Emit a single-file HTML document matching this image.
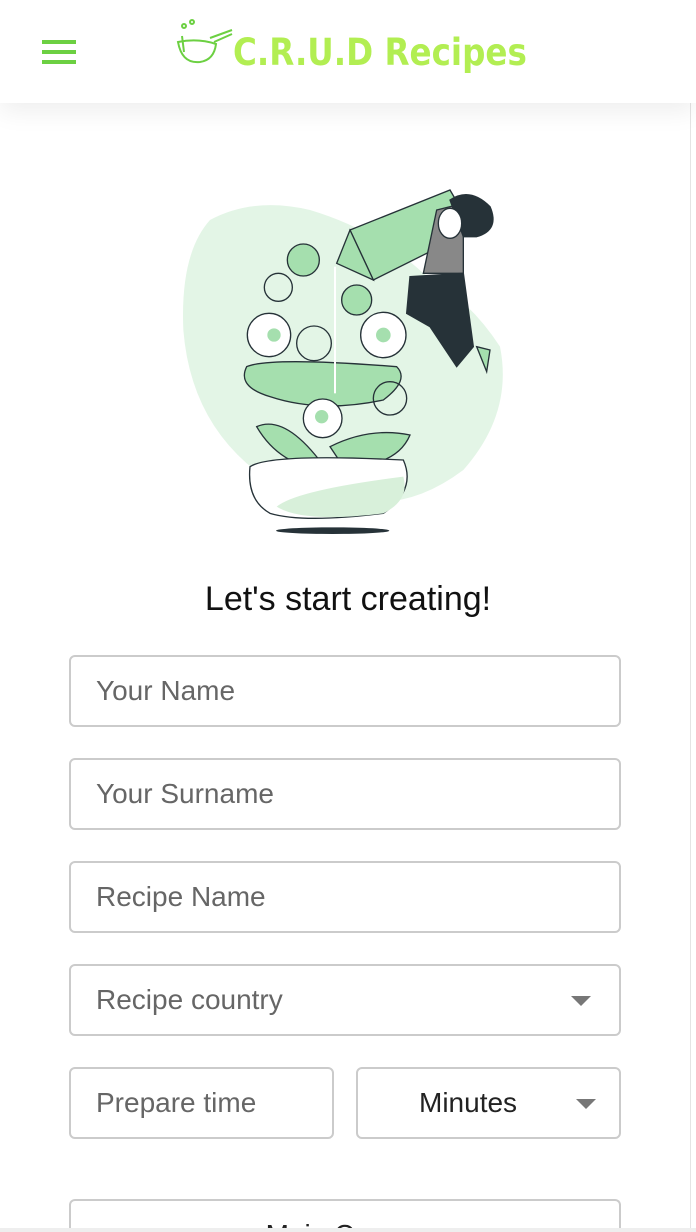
<!DOCTYPE html>
<html><head><meta charset="utf-8"><style>
*{box-sizing:border-box;margin:0;padding:0}
html,body{width:696px;height:1232px;overflow:hidden}
body{background:#fff;font-family:"Liberation Sans",sans-serif;position:relative}
.hdr{position:absolute;left:0;top:0;width:696px;height:103px;background:#fff;box-shadow:0 8px 24px rgba(0,0,0,.07);z-index:2}
.ham{position:absolute;left:42px;width:34px;height:4px;background:#6cd042}
.logo{position:absolute;left:233px;top:31px;font-size:37px;font-weight:bold;color:#b2ee52;font-family:"DejaVu Sans","Liberation Sans",sans-serif;transform:scaleX(.88);transform-origin:left;white-space:nowrap}
.fld{position:absolute;left:69px;width:552px;height:72px;border:2px solid #cbcbcb;border-radius:6px;font-size:28px;color:#666;padding-left:25px;line-height:68px;white-space:nowrap}
.arr{position:absolute;right:28px;top:30px;width:0;height:0;border-left:10px solid transparent;border-right:10px solid transparent;border-top:10px solid #777}
h1{position:absolute;top:580px;left:0;width:696px;text-align:center;font-size:34px;font-weight:normal;color:#111}
</style></head><body>
<div class="hdr">
<div class="ham" style="top:40px"></div><div class="ham" style="top:50px"></div><div class="ham" style="top:60px"></div>
<svg style="position:absolute;left:174px;top:18px" width="60" height="50" viewBox="0 0 60 50" fill="none" stroke="#6cd042" stroke-width="2">
<path d="M4 24 Q8 46 26 44 Q40 42 42 26 Q24 20 4 24Z"/><path d="M36 20 L58 12 M40 24 L58 16"/><circle cx="10" cy="8" r="2"/><circle cx="18" cy="4" r="2"/><path d="M8 18 L10 34"/></svg>
<div class="logo">C.R.U.D Recipes</div>
</div>
<div style="position:absolute;right:5px;top:0;width:1px;height:1232px;background:#e4e4e4"></div>
<svg style="position:absolute;left:170px;top:180px" width="350" height="360" viewBox="0 0 1050 1080">
<path d="M120 120 Q250 50 420 90 Q620 150 760 280 Q900 360 990 500 Q1030 700 880 870 Q720 990 560 960 Q360 960 230 850 Q60 700 40 450 Q30 220 120 120Z" fill="#e3f5e6"/>
<g stroke="#263238" stroke-width="4">
<path d="M540 150 L840 30 L910 150 L610 300Z" fill="#a5dfae"/>
<path d="M540 150 L500 250 L610 300Z" fill="#a5dfae"/>
<path d="M800 90 L880 70 L880 280 L760 280Z" fill="#888"/>
<path d="M720 290 L880 280 L910 500 L860 560 L780 440 L710 400Z" fill="#263238"/>
<path d="M840 60 Q900 20 960 80 Q990 150 920 170 L880 170Z" fill="#263238"/>
<ellipse cx="840" cy="130" rx="35" ry="45" fill="#fff"/>
<path d="M920 500 L960 510 L950 575Z" fill="#a5dfae"/>
<circle cx="400" cy="240" r="48" fill="#a5dfae"/><circle cx="560" cy="360" r="45" fill="#a5dfae"/>
<circle cx="325" cy="322" r="42" fill="none"/><circle cx="432" cy="490" r="52" fill="none"/>
<circle cx="297" cy="465" r="65" fill="#fff"/><circle cx="640" cy="465" r="68" fill="#fff"/>
<path d="M230 560 Q300 530 680 560 Q720 600 640 660 Q450 700 300 650 Q200 620 230 560Z" fill="#a5dfae"/>
<circle cx="660" cy="655" r="50" fill="none"/>
<circle cx="458" cy="715" r="58" fill="#fff"/>
<path d="M260 740 Q350 700 470 870 Q330 860 260 740Z" fill="#a5dfae"/>
<path d="M480 800 Q600 740 720 765 Q680 860 520 860Z" fill="#a5dfae"/>
<path d="M240 860 Q300 820 700 840 Q740 930 640 1000 Q400 1030 300 1000 Q230 960 240 860Z" fill="#fff"/>
<path d="M320 980 Q380 930 700 890 Q720 960 640 1000 Q400 1030 320 980Z" fill="#d8f0da" stroke="none"/>
<path d="M495 260 L495 640" stroke="#fff" stroke-width="6"/>
</g>
<circle cx="312" cy="465" r="20" fill="#a5dfae"/><circle cx="640" cy="465" r="22" fill="#a5dfae"/><circle cx="455" cy="710" r="20" fill="#a5dfae"/>
<ellipse cx="488" cy="1052" rx="170" ry="10" fill="#263238"/>
</svg>
<h1>Let's start creating!</h1>
<div class="fld" style="top:655px">Your Name</div>
<div class="fld" style="top:758px">Your Surname</div>
<div class="fld" style="top:861px">Recipe Name</div>
<div class="fld" style="top:964px">Recipe country<div class="arr"></div></div>
<div class="fld" style="top:1067px;width:265px">Prepare time</div>
<div class="fld" style="top:1067px;left:356px;width:265px;color:#222;padding-left:61px">Minutes<div class="arr" style="right:23px"></div></div>
<div class="fld" style="top:1199px;height:40px;border-bottom:none;border-radius:6px 6px 0 0;text-align:center;color:#222;padding:0;line-height:68px">Main Course</div>
<div style="position:absolute;left:0;top:1228px;width:696px;height:4px;background:#eee;z-index:5"></div>
</body></html>
